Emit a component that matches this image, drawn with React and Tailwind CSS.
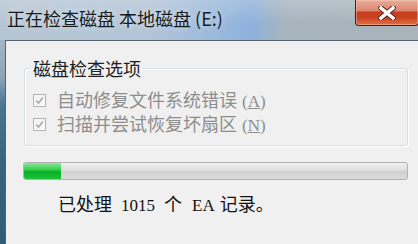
export default function App() {
  const cjk = "font-['Noto_Sans_CJK_SC','Noto_Sans',sans-serif]";
  const serif = "font-['Liberation_Serif','Noto_Sans_CJK_SC',serif]";

  const Check = () => (
    <span className="w-[13px] h-[13px] border border-[#b4b4b4] bg-[linear-gradient(135deg,#f2f2f2,#fbfbfb)] flex items-center justify-center shrink-0">
      <svg width="9" height="9" viewBox="0 0 9 9">
        <path d="M1 4.5 L3.5 7 L8 1.5" fill="none" stroke="#a9a9a9" strokeWidth="1.6" />
      </svg>
    </span>
  );

  return (
    <div className={`w-[418px] h-[244px] overflow-hidden flex flex-col ${cjk}`}>
      {/* title bar */}
      <div className="h-[40px] flex items-start justify-between shrink-0 bg-[linear-gradient(to_bottom,rgba(255,255,255,0.2),rgba(255,255,255,0)_60%),linear-gradient(to_right,#b6c5d3_0%,#b3c5d7_35%,#97b6dc_55%,#8fb1dc_60%,#a6b4bf_68%,#aab4ba_100%)]">
        <div className="pl-[7px] pt-[7px] text-[18px] leading-[22px] text-[#161c22] whitespace-nowrap [text-shadow:0_0_6px_rgba(255,255,255,0.7)]">
          正在检查磁盘 本地磁盘 (E:)
        </div>
        <div className="w-[64px] h-[26px] ml-auto mr-[-1px] rounded-b-[4px] border border-t-0 border-[#4a1c12] shadow-[inset_0_0_0_1px_rgba(255,210,190,0.45)] bg-[linear-gradient(to_bottom,#e9ad9c_0%,#dc8670_42%,#c53c1f_50%,#c8421f_70%,#e07048_100%)] flex items-center justify-center">
          <svg width="18" height="14" viewBox="0 0 18 14">
            <path d="M3 2 L15 12 M15 2 L3 12" stroke="#5a2418" strokeWidth="5.5" strokeLinecap="square" />
            <path d="M3 2 L15 12 M15 2 L3 12" stroke="#ffffff" strokeWidth="3.5" strokeLinecap="square" />
          </svg>
        </div>
      </div>

      {/* body */}
      <div className="flex flex-1">
        <div className="w-[5px] shrink-0 bg-[linear-gradient(to_bottom,#a4b4c2_0%,#8fa6b8_18%,#4a7590_32%,#36657f_60%,#2f5d78_100%)]" />
        <div className="flex-1 bg-[#f0f0f0] border-t border-l border-[#56636d] flex flex-col">
          <fieldset className="mt-[18px] ml-[18px] mr-[10px] border border-[#d5dfe5] rounded-[3px] pl-[6px] pr-0 pt-[11px] pb-[9px] shadow-[inset_1px_1px_0_#fff,1px_1px_0_#fff]">
            <legend className="px-[2px] text-[18px] leading-[18px] text-[#1e1e1e]">磁盘检查选项</legend>
            <div className="flex items-center h-[24px] pl-[2px] text-[18px] text-[#8d8d8d] whitespace-nowrap">
              <Check />
              <span className="ml-[11px] leading-[24px]">
                自动修复文件系统错误
                <span className={`${serif} text-[17px] ml-[5px]`}>(<span className="underline">A</span>)</span>
              </span>
            </div>
            <div className="flex items-center h-[24px] pl-[2px] text-[18px] text-[#8d8d8d] whitespace-nowrap">
              <Check />
              <span className="ml-[11px] leading-[24px]">
                扫描并尝试恢复坏扇区
                <span className={`${serif} text-[17px] ml-[5px]`}>(<span className="underline">N</span>)</span>
              </span>
            </div>
          </fieldset>

          <div className="mt-[16px] ml-[17px] mr-[10px] h-[18px] rounded-[3px] border border-[#b2b2b2] bg-[linear-gradient(to_bottom,#f0f0f0_0%,#dedede_45%,#cfcfcf_55%,#dcdcdc_100%)] overflow-hidden flex">
            <div className="w-[37px] h-full bg-[linear-gradient(to_bottom,#8be79a_0%,#38d04e_40%,#06b025_55%,#1fc43c_100%)]" />
          </div>

          <div className="mt-[11px] ml-[52px] leading-[24px] text-[18px] text-[#111] whitespace-nowrap">
            已处理
            <span className={`${serif} text-[17px] ml-[9px] mr-[9px]`}>1015</span>
            个
            <span className={`${serif} text-[17px] ml-[10px] mr-[5px]`}>EA</span>
            记录。
          </div>
        </div>
      </div>
    </div>
  );
}
